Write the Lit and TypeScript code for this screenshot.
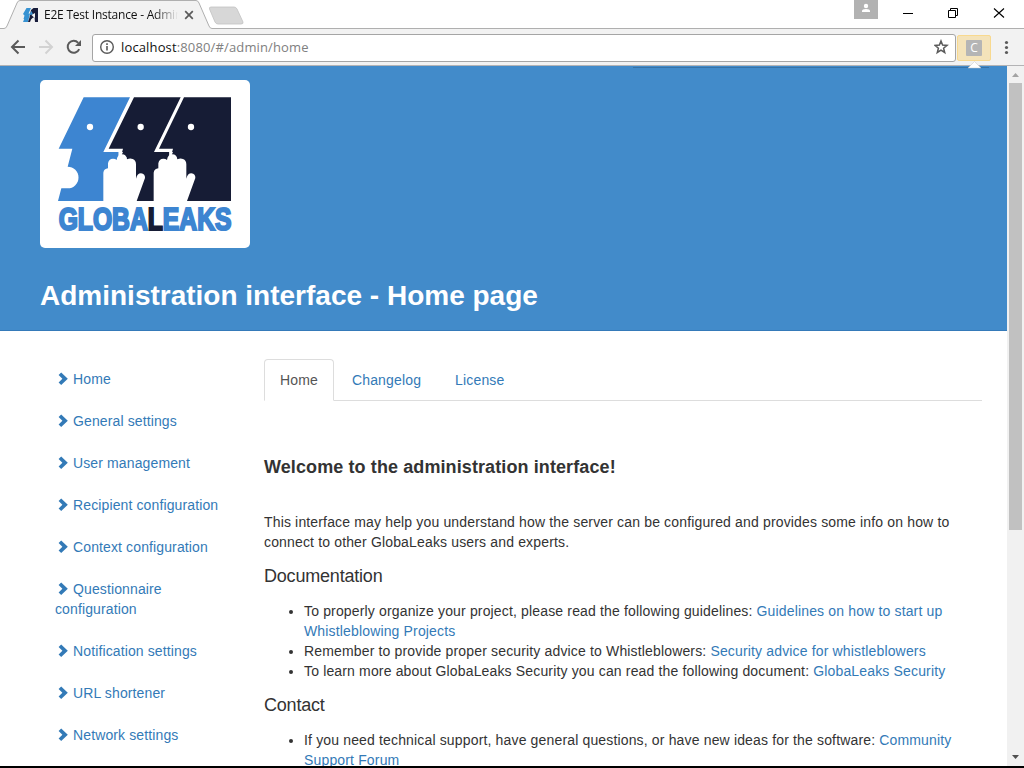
import { LitElement, html, css, svg } from "lit";
import { customElement } from "lit/decorators.js";

const MENU = [
  "Home",
  "General settings",
  "User management",
  "Recipient configuration",
  "Context configuration",
  "Questionnaire configuration",
  "Notification settings",
  "URL shortener",
  "Network settings",
];

@customElement("browser-chrome")
export class BrowserChrome extends LitElement {
  static styles = css`
    :host { display: block; font-family: "Open Sans", "Noto Sans", sans-serif; }
    svg { display: block; flex: none; }
    .titlebar { position: relative; display: flex; height: 29px; background: #fff; box-sizing: border-box; }
    .shape { position: absolute; left: 0; top: 0; }
    .tab { position: relative; display: flex; align-items: center; padding: 3px 0 0 23px; height: 27px; width: 831px; box-sizing: border-box; }
    .tab .label { margin-left: 6px; width: 134px; overflow: hidden; white-space: nowrap; font-size: 12px; line-height: 18px; letter-spacing: -0.22px; color: #111;
      -webkit-mask-image: linear-gradient(to right, #000 110px, transparent 134px); mask-image: linear-gradient(to right, #000 110px, transparent 134px); }
    .tab .close { margin-left: 6px; }
    .controls { position: relative; display: flex; margin-left: 23px; height: 28px; }
    .toolbar { display: flex; align-items: center; height: 37px; box-sizing: border-box; background: #f2f2f2; border-bottom: 1px solid #b3b3b5; }
    .nav { margin-right: 6px; }
    .url { display: flex; align-items: center; width: 864px; height: 28px; box-sizing: border-box; border: 1px solid #a5a5a5; border-radius: 3px; background: #fff; margin-top: 1px; padding-bottom: 1px; }
    .address { flex: 1; margin-left: 6px; font-size: 13px; line-height: 20px; letter-spacing: 0.14px; color: #808080; white-space: nowrap; }
    .host { color: #111; }
    .ext { display: flex; align-items: center; justify-content: center; margin: 1px 0 0 1px; width: 34px; height: 26px; box-sizing: border-box; border: 1px solid #f8d98f; border-radius: 2px; background: #f4e3ba; }
    .badge { width: 16px; height: 16px; border-radius: 1px; background: #b5b5b5; color: #fff; font-weight: 500; font-size: 12px; line-height: 16px; text-align: center; }
    .dots { margin-left: 11px; }
  `;

  render() {
    return html`
      <div class="titlebar">
        <svg class="shape" width="1024" height="29" viewBox="0 0 1024 29" fill="none">
          <path d="M0 28.500H4Q6 28.500 7 26L17 3Q18 .5 20 .5H196Q198 .5 199 3L209 26Q210 28.500 212 28.500H1024V30H0Z" fill="#f2f2f2" stroke="#afafaf" />
          <path d="M211 7H234Q236 7 237 9L243 22Q243.500 24 241 24H218Q216 24 215 22L209.500 9Q209 7 211 7Z" fill="#d7d7d7" stroke="#c2c2c2" stroke-width=".8" />
        </svg>
        <div class="tab">
          <svg width="15" height="14" viewBox="0 0 15 14">
            <path d="M3.500 0H8L5.500 5.500H7L5 14H0L1.200 11H.5L1.500 7.500L0 6Z" fill="#3692d2" />
            <path d="M8 2L10.500 0H15V14H12L11.500 9L9.500 10L8 11.500L7 14H5L6.500 9.500Z" fill="#171c3a" />
            <path d="M7.800 4L6.500 7L10 6.500L8.500 3Z" fill="#3692d2" />
            <path d="M8.500 7L12 5V10L10 8.500Z" fill="#f2f2f2" />
          </svg>
          <span class="label">E2E Test Instance - Admin</span>
          <svg class="close" width="10" height="10" viewBox="0 0 10 10" stroke="#5a5a5a" stroke-width="1.700"><path d="M1.200 1.200L8.800 8.800M8.800 1.200L1.200 8.800" /></svg>
        </div>
        <div class="controls">
          <svg width="170" height="28" viewBox="854 0 170 28">
            <path d="M854 0H878V19H854Z" fill="#b2b2b2" />
            <circle cx="866" cy="6" r="2.200" fill="#fff" />
            <path d="M862 12V11Q862 9 866 9T870 11V12Z" fill="#fff" />
            <path d="M903 13.500H913" stroke="#000" />
            <path d="M948.500 10.500H955.500V17.500H948.500ZM950.500 10.500V8.500H957.500V15.500H955.500" fill="none" stroke="#000" />
            <path d="M994 8.500L1004 17.500M1004 8.500L994 17.500" stroke="#000" stroke-width="1.100" />
          </svg>
        </div>
      </div>
      <div class="toolbar">
        <svg class="nav" width="86" height="36" viewBox="0 29 86 36" fill="none" stroke-width="2">
          <path d="M25 47H12.500M18.500 40.500L12 47L18.500 53.500" stroke="#5a5a5a" />
          <path d="M39 47H51.500M45.500 40.500L52 47L45.500 53.500" stroke="#d2d2d2" />
          <path d="M79.200 49.200A6 6 0 1 1 78.200 42.800" stroke="#5a5a5a" />
          <path d="M81 40V46H75Z" fill="#5a5a5a" />
        </svg>
        <div class="url">
          <svg width="22" height="16" viewBox="0 0 22 16" fill="none" stroke="#5a5a5a">
            <circle cx="14" cy="8" r="6.300" stroke-width="1.400" />
            <path d="M14 7V11.500M14 4.300V5.900" stroke-width="1.600" />
          </svg>
          <span class="address"><span class="host">localhost</span>:8080/#/admin/home</span>
          <svg width="21" height="16" viewBox="0 0 21 16">
            <path d="M7 2L8.600 6.100L13 6.400L9.600 9.200L10.700 13.500L7 11.100L3.300 13.500L4.400 9.200L1 6.400L5.400 6.100Z" fill="none" stroke="#5a5a5a" stroke-width="1.500" />
          </svg>
        </div>
        <div class="ext"><div class="badge">C</div></div>
        <svg class="dots" width="10" height="16" viewBox="0 0 10 16" fill="#5a5a5a"><circle cx="4.500" cy="3.500" r="1.600" /><circle cx="4.500" cy="8.500" r="1.600" /><circle cx="4.500" cy="13.500" r="1.600" /></svg>
      </div>
    `;
  }
}

const hand = svg`
  <path d="M220 393V308Q222 296 234 295V280Q236 266 249 266Q256 266 260 270Q262 253 276 253Q289 253 291 268Q300 264 308 267Q318 271 318 283V326Q322 310 333 310Q346 312 345 324L320 393Z" fill="#fff" />
`;

@customElement("globaleaks-logo")
export class GlobaleaksLogo extends LitElement {
  static styles = css`
    :host { display: block; width: 210px; height: 168px; background: #fff; border-radius: 5px; }
    svg { display: block; }
    .name { font: bold 94px "Liberation Sans", Arial, sans-serif; fill: #3d85d1; stroke: #3d85d1; stroke-width: 6.5px; }
    .dark { fill: #161c35; stroke: #161c35; }
  `;

  render() {
    return html`
      <svg width="210" height="168" viewBox="30 30 630 504">
        <path d="M161 82H300L220 246H266V262H290V393H84L94 355H113A32 32 0 0 0 113 290L127 236H86Z" fill="#3d85d1" />
        <path d="M312 82H452L372 246H418V262H440V393H290V262H272L279 236H236Z" fill="#161c35" />
        <path d="M462 82H603V393H440V262H422L429 236H387Z" fill="#161c35" />
        <circle cx="180" cy="171" r="9.500" fill="#fff" />
        <circle cx="332" cy="171" r="9.500" fill="#fff" />
        <circle cx="483" cy="171" r="9.500" fill="#fff" />
        <path d="M266 246V262H272L279 246ZM418 246V262H422L429 246Z" fill="#fff" />
        ${hand}
        <g transform="translate(151 0)">${hand}</g>
        <text class="name" x="0" y="0" transform="translate(86 480) scale(.79 1)" textLength="656" lengthAdjust="spacingAndGlyphs">GLOBA<tspan class="dark">L</tspan>EAKS</text>
      </svg>
    `;
  }
}

@customElement("app-root")
export class AppRoot extends LitElement {
  static styles = css`
    :host { display: flex; flex-direction: column; position: relative; width: 1024px; height: 768px; overflow: hidden; box-sizing: border-box; border-bottom: 2px solid #000;
      font-family: "Liberation Sans", Arial, sans-serif; font-size: 14px; line-height: 20px; color: #333; background: #fff; }
    .view { display: flex; flex: 1; min-height: 0; }
    .page { width: 1007px; overflow: hidden; }
    .header { height: 265px; box-sizing: border-box; padding: 14px 40px 0; background: #428bca; border-bottom: 1px solid #357ab9; }
    .title { margin: 31px 0 0; font-size: 28px; line-height: 34px; font-weight: bold; color: #fff; white-space: nowrap; }
    .columns { display: grid; grid-template-columns: 194px 718px; column-gap: 30px; padding: 28px 25px 0 40px; letter-spacing: 0.155px; }
    .menu { display: flex; flex-direction: column; gap: 2px; margin: 0; padding: 0; list-style: none; letter-spacing: 0.12px; }
    .menu li { padding: 10px 15px; }
    a { color: #337ab7; text-decoration: none; }
    .chevron { display: inline-block; width: 14px; height: 14px; vertical-align: -2px; fill: #337ab7; }
    .tabs { display: flex; gap: 2px; border-bottom: 1px solid #ddd; height: 41px; }
    .tabs a { height: 42px; box-sizing: border-box; padding: 10px 15px; border: 1px solid transparent; border-radius: 4px 4px 0 0; }
    .tabs .active { color: #555; background: #fff; border-color: #ddd #ddd #fff; }
    .welcome { margin: 56px 0 35px; font-size: 18px; line-height: 20px; font-weight: bold; letter-spacing: 0.1px; }
    .text { margin: 0; }
    h4 { margin: 14px 0 15px; font-size: 18px; line-height: 20px; font-weight: normal; letter-spacing: -0.2px; }
    .list { margin: 0; padding-left: 40px; }
    .scroll { display: flex; flex-direction: column; justify-content: space-between; width: 17px; background: #f1f1f1; }
    .thumb { width: 13px; height: 447px; margin: 0 0 0 2px; background: #c1c1c1; }
    .scroll svg { display: block; }
    .popup { position: absolute; left: 632px; top: 60px; }
  `;

  render() {
    return html`
      <browser-chrome></browser-chrome>
      <div class="view">
        <div class="page">
          <div class="header">
            <globaleaks-logo></globaleaks-logo>
            <h1 class="title">Administration interface - Home page</h1>
          </div>
          <div class="columns">
            <ul class="menu">
              ${MENU.map((item) => html`<li><a><svg class="chevron" viewBox="0 0 14 14"><path d="M6.200 .4L12.800 6.700L6.200 13L3.600 10.400L7.400 6.700L3.600 3Z" /></svg> ${item}</a></li>`)}
            </ul>
            <div>
              <div class="tabs"><a class="active">Home</a><a>Changelog</a><a>License</a></div>
              <div class="welcome">Welcome to the administration interface!</div>
              <p class="text">This interface may help you understand how the server can be configured and provides some info on how to connect to other GlobaLeaks users and experts.</p>
              <h4>Documentation</h4>
              <ul class="list">
                <li>To properly organize your project, please read the following guidelines: <a>Guidelines on how to start up Whistleblowing Projects</a></li>
                <li>Remember to provide proper security advice to Whistleblowers: <a>Security advice for whistleblowers</a></li>
                <li>To learn more about GlobaLeaks Security you can read the following document: <a>GlobaLeaks Security</a></li>
              </ul>
              <h4>Contact</h4>
              <ul class="list">
                <li>If you need technical support, have general questions, or have new ideas for the software: <a>Community Support Forum</a></li>
              </ul>
            </div>
          </div>
        </div>
        <div class="scroll">
          <div>
            <svg width="17" height="17"><path d="M5 11L8.500 7L12 11Z" fill="#a3a3a3" /></svg>
            <div class="thumb"></div>
          </div>
          <svg width="17" height="17"><path d="M5 6L8.500 10L12 6Z" fill="#505050" /></svg>
        </div>
      </div>
      <svg class="popup" width="358" height="9" viewBox="632 60 358 9">
        <path d="M633 67.500H989" stroke="#3672a7" />
        <path d="M968 68L974.500 61.500L981 68Z" fill="#fff" stroke="#c5c5c5" stroke-width=".5" />
      </svg>
    `;
  }
}
